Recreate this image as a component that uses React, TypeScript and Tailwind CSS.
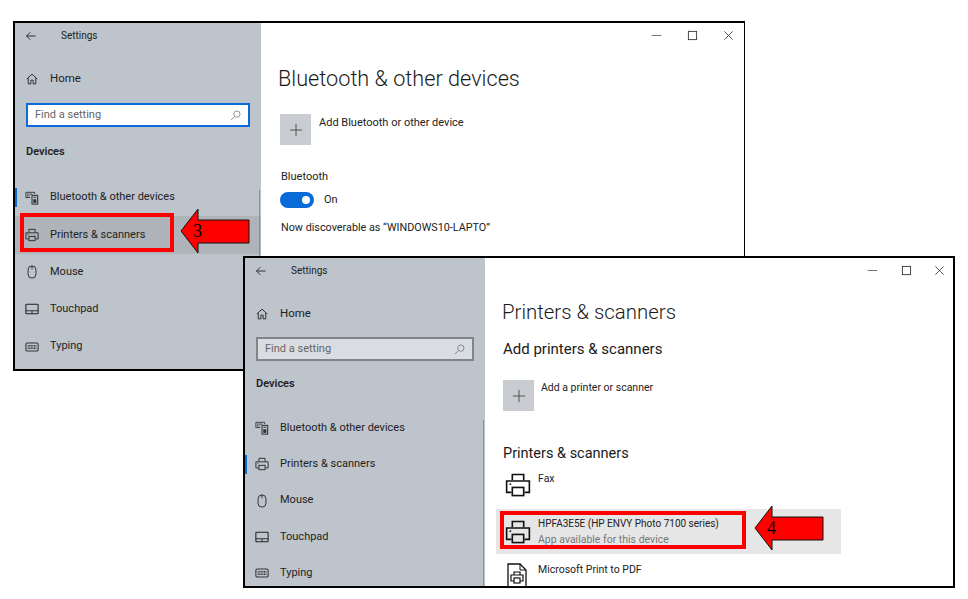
import type { ReactNode } from "react";

const FONT = "font-['Roboto','Open_Sans',sans-serif]";

function Ico({ className = "", children, box = "0 0 16 16" }: { className?: string; children: ReactNode; box?: string }) {
  return (
    <svg viewBox={box} className={className} fill="none" stroke="currentColor" strokeWidth="1">
      {children}
    </svg>
  );
}

const BackIcon = () => (
  <Ico className="w-3 h-3 text-[#222]">
    <path d="M14 8H2M7 3L2 8l5 5" strokeWidth="1.2" />
  </Ico>
);
const HomeIcon = () => (
  <Ico className="w-3 h-3 text-[#222]">
    <path d="M1 8l7-6.5L15 8M3 6.5V14.5h3.5V9.5h3v5H13V6.5" strokeWidth="1.2" />
  </Ico>
);
const SearchIcon = ({ className = "" }: { className?: string }) => (
  <Ico className={`w-[11px] h-[11px] ${className}`}>
    <circle cx="10" cy="6" r="4.6" />
    <path d="M6.6 9.4L1.5 14.5" />
  </Ico>
);
const DevicesIcon = () => (
  <Ico className="w-[14px] h-[14px] text-[#333]">
    <path d="M1 1.5h10v2M1 1.5v6h5" />
    <path d="M2.5 3.5h6M2.5 5.5h3" strokeWidth="1.3" strokeDasharray="1 0.6" />
    <rect x="8" y="5" width="6.5" height="10" fill="#bdc4cc" strokeWidth="1.2" />
    <rect x="10" y="10" width="2.5" height="3" fill="currentColor" />
    <path d="M9.6 7.2h3.4" />
  </Ico>
);
const PrinterIcon = ({ className = "w-[14px] h-[14px] text-[#222]" }: { className?: string }) => (
  <Ico className={className}>
    <path d="M4.5 5V1.5h7V5" />
    <path d="M4 12.5H1V5.5h14v7h-3" />
    <rect x="4.5" y="9.5" width="7" height="5" />
    <path d="M2.8 7.5h1" />
  </Ico>
);
const MouseIcon = () => (
  <Ico className="w-[14px] h-[14px] text-[#222]">
    <rect x="3.5" y="1" width="9" height="14" rx="4.5" />
    <path d="M8 1v4" />
  </Ico>
);
const TouchpadIcon = () => (
  <Ico className="w-[14px] h-[14px] text-[#222]">
    <rect x="1" y="2.5" width="14" height="11" rx="1" strokeWidth="1.2" />
    <path d="M1 10h14M8 10v3.5" />
  </Ico>
);
const KeyboardIcon = () => (
  <Ico className="w-[14px] h-[14px] text-[#333]">
    <rect x="1" y="3.5" width="14" height="9" rx="1.5" strokeWidth="1.2" />
    <path d="M3 6.5h10M3 9.5h10" strokeWidth="1.6" strokeDasharray="1.2 0.6" />
  </Ico>
);
const PdfPrinterIcon = () => (
  <Ico className="w-[20px] h-[24px] shrink-0 text-[#111]" box="0 0 20 24">
    <path d="M1 1h12l6 6v17H1z" strokeWidth="1.3" />
    <path d="M13 1v6h6" />
    <path d="M7 12V9h6v3M7 18H4v-6h12v6h-3" strokeWidth="1.2" />
    <rect x="7" y="15" width="6" height="5" strokeWidth="1.2" />
  </Ico>
);

function Controls({ gapClass }: { gapClass: string }) {
  return (
    <div className={`flex justify-end items-center h-6 text-[#333] ${gapClass}`}>
      <Ico className="w-[11px] h-[11px]"><path d="M1 8h14" /></Ico>
      <Ico className="w-[11px] h-[11px]"><rect x="2" y="2" width="12" height="12" strokeWidth="1.3" /></Ico>
      <Ico className="w-[11px] h-[11px]"><path d="M2 2l12 12M14 2L2 14" strokeWidth="1.2" /></Ico>
    </div>
  );
}

function PlusTile() {
  return (
    <div className="w-[31px] h-[31px] bg-[#c9ccd0] flex items-center justify-center shrink-0 text-[#444]">
      <Ico className="w-[14px] h-[14px]"><path d="M8 1v14M1 8h14" /></Ico>
    </div>
  );
}

function NavRow({ icon, label, className, active, hover }: { icon: ReactNode; label: string; className: string; active?: boolean; hover?: boolean }) {
  return (
    <div className={`flex items-center relative ${className} ${hover ? "bg-[#aeb4ba]" : ""}`}>
      {active && <div className="absolute left-0 top-[9px] w-[2px] h-[19px] bg-[#0a6ad8]" />}
      <div className="w-[35px] pl-[10px] shrink-0 flex">{icon}</div>
      <span className="text-[11px] text-[#222]">{label}</span>
    </div>
  );
}

function Sidebar({
  widthClass,
  rowClass,
  searchClass,
  devicesClass,
  listClass,
  activeIndex,
  hoverIndex,
  barClass,
}: {
  widthClass: string;
  rowClass: string;
  searchClass: string;
  devicesClass: string;
  listClass: string;
  activeIndex: number;
  hoverIndex?: number;
  barClass: string;
}) {
  const items = [
    { icon: <DevicesIcon />, label: "Bluetooth & other devices" },
    { icon: <PrinterIcon />, label: "Printers & scanners" },
    { icon: <MouseIcon />, label: "Mouse" },
    { icon: <TouchpadIcon />, label: "Touchpad" },
    { icon: <KeyboardIcon />, label: "Typing" },
  ];
  return (
    <div className={`${widthClass} shrink-0 bg-[#bdc4cc] relative overflow-hidden`}>
      <div className="h-6 flex items-center pl-[10px] pt-[1px]">
        <BackIcon />
        <span className="ml-[24px] text-[10px] text-[#222]">Settings</span>
      </div>
      <div className="h-[32px] mt-[16px] flex items-center pl-[11px]">
        <HomeIcon />
        <span className="ml-[12px] text-[11.5px] text-[#222]">Home</span>
      </div>
      <div className={`mx-[11px] h-[24px] border-2 flex items-center justify-between px-[7px] pt-[1px] ${searchClass}`}>
        <span className="text-[11px] text-[#666]">Find a setting</span>
        <SearchIcon className="text-[#666]" />
      </div>
      <div className={`pl-[11px] text-[11px] font-semibold text-[#222] leading-4 ${devicesClass}`}>Devices</div>
      <div className={listClass}>
        {items.map((it, i) => (
          <NavRow key={it.label} icon={it.icon} label={it.label} className={rowClass} active={i === activeIndex} hover={i === hoverIndex} />
        ))}
      </div>
      <div className={`absolute right-[1px] w-[1px] bg-[#8a8f95] ${barClass}`} />
    </div>
  );
}

function Arrow({ label, className }: { label: string; className: string }) {
  return (
    <div className={`absolute w-[70px] h-[46px] ${className}`}>
      <svg viewBox="0 0 70 46" className="absolute inset-0 w-full h-full">
        <path d="M1 23L18 1v11h51v23H18v10z" fill="#fe0000" stroke="#111" strokeWidth="1" />
      </svg>
      <span className="absolute left-[13px] top-[11px] text-[18px] leading-6 text-black font-['Liberation_Serif',serif]">{label}</span>
    </div>
  );
}

export default function App() {
  return (
    <div className={`relative w-[968px] h-[599px] bg-white overflow-hidden ${FONT}`}>
      {/* back window */}
      <div className="absolute left-[13px] top-[21px] w-[732px] h-[350px] border-2 border-black border-r border-r-black bg-white flex">
        <Sidebar
          widthClass="w-[246px]"
          rowClass="h-[37.25px]"
          searchClass="bg-white border-[#0a6ad8] mt-[8px]"
          devicesClass="mt-[17px]"
          listClass="mt-[19px]"
          activeIndex={0}
          hoverIndex={1}
          barClass="top-[167px] bottom-[113px]"
        />
        <div className="flex-1 pl-[18px] pr-[10px]">
          <Controls gapClass="gap-[25px]" />
          <h1 className="text-[21.7px] font-light leading-7 text-[#1a1a1a] mt-[18px] -ml-[1px]">Bluetooth &amp; other devices</h1>
          <div className="flex mt-[21px]">
            <div className="ml-[1px]"><PlusTile /></div>
            <span className="ml-[8px] pt-[1px] text-[11px] leading-4 text-[#222]">Add Bluetooth or other device</span>
          </div>
          <div className="text-[11px] leading-4 text-[#222] mt-[24px] ml-[2px]">Bluetooth</div>
          <div className="flex items-center mt-[7px] ml-[1px]">
            <div className="w-[34px] h-[16px] rounded-full bg-[#0a6ad8] relative">
              <div className="absolute right-[4px] top-[4px] w-[8px] h-[8px] rounded-full bg-white" />
            </div>
            <span className="ml-[10px] text-[11px] text-[#222]">On</span>
          </div>
          <div className="text-[10.8px] leading-4 text-[#222] mt-[11px] ml-[2px]">Now discoverable as “WINDOWS10-LAPTO”</div>
        </div>
      </div>

      {/* red call-out on the back window */}
      <div className="absolute left-[20px] top-[213px] w-[154px] h-[39px] border-[4px] border-[#fe0000]" />
      <Arrow label="3" className="left-[180px] top-[208px]" />

      {/* front window */}
      <div className="absolute left-[243px] top-[256px] w-[712px] h-[332px] border-2 border-black bg-white flex">
        <Sidebar
          widthClass="w-[240px]"
          rowClass="h-[36.25px]"
          searchClass="bg-[#d9dde1] border-[#808589] mt-[7px]"
          devicesClass="mt-[15px]"
          listClass="mt-[18px]"
          activeIndex={1}
          barClass="top-[162px] bottom-0"
        />
        <div className="flex-1 pl-[18px] pr-[8px]">
          <Controls gapClass="gap-[22.5px]" />
          <h1 className="text-[20.4px] font-light leading-7 text-[#1a1a1a] mt-[16px] -ml-[1px]">Printers &amp; scanners</h1>
          <h2 className="text-[15px] leading-5 text-[#1a1a1a] mt-[13px]">Add printers &amp; scanners</h2>
          <div className="flex mt-[21px]">
            <PlusTile />
            <span className="ml-[7px] text-[10.5px] leading-4 text-[#222]">Add a printer or scanner</span>
          </div>
          <h2 className="text-[14.5px] leading-5 text-[#1a1a1a] mt-[33px]">Printers &amp; scanners</h2>
          <div className="flex mt-[8px] ml-[2px] h-[27px]">
            <PrinterIcon className="w-[26px] h-[26px] text-[#111]" />
            <span className="ml-[7px] -mt-[1px] text-[10.5px] leading-4 text-[#222]">Fax</span>
          </div>
          <div className="flex items-center -ml-[7px] mt-[10px] w-[345px] h-[45px] bg-[#e6e6e6] pl-[9px]">
            <PrinterIcon className="w-[26px] h-[26px] text-[#111]" />
            <div className="ml-[7px]">
              <div className="text-[10px] leading-4 text-[#222]">HPFA3E5E (HP ENVY Photo 7100 series)</div>
              <div className="text-[10.5px] leading-4 text-[#777]">App available for this device</div>
            </div>
          </div>
          <div className="flex mt-[9px] ml-[4px]">
            <PdfPrinterIcon />
            <span className="ml-[11px] -mt-[1px] text-[10.5px] leading-4 text-[#222]">Microsoft Print to PDF</span>
          </div>
        </div>
      </div>

      {/* red call-out on the front window */}
      <div className="absolute left-[500px] top-[511px] w-[246px] h-[38px] border-[4px] border-[#fe0000]" />
      <Arrow label="4" className="left-[754px] top-[505px]" />
    </div>
  );
}
